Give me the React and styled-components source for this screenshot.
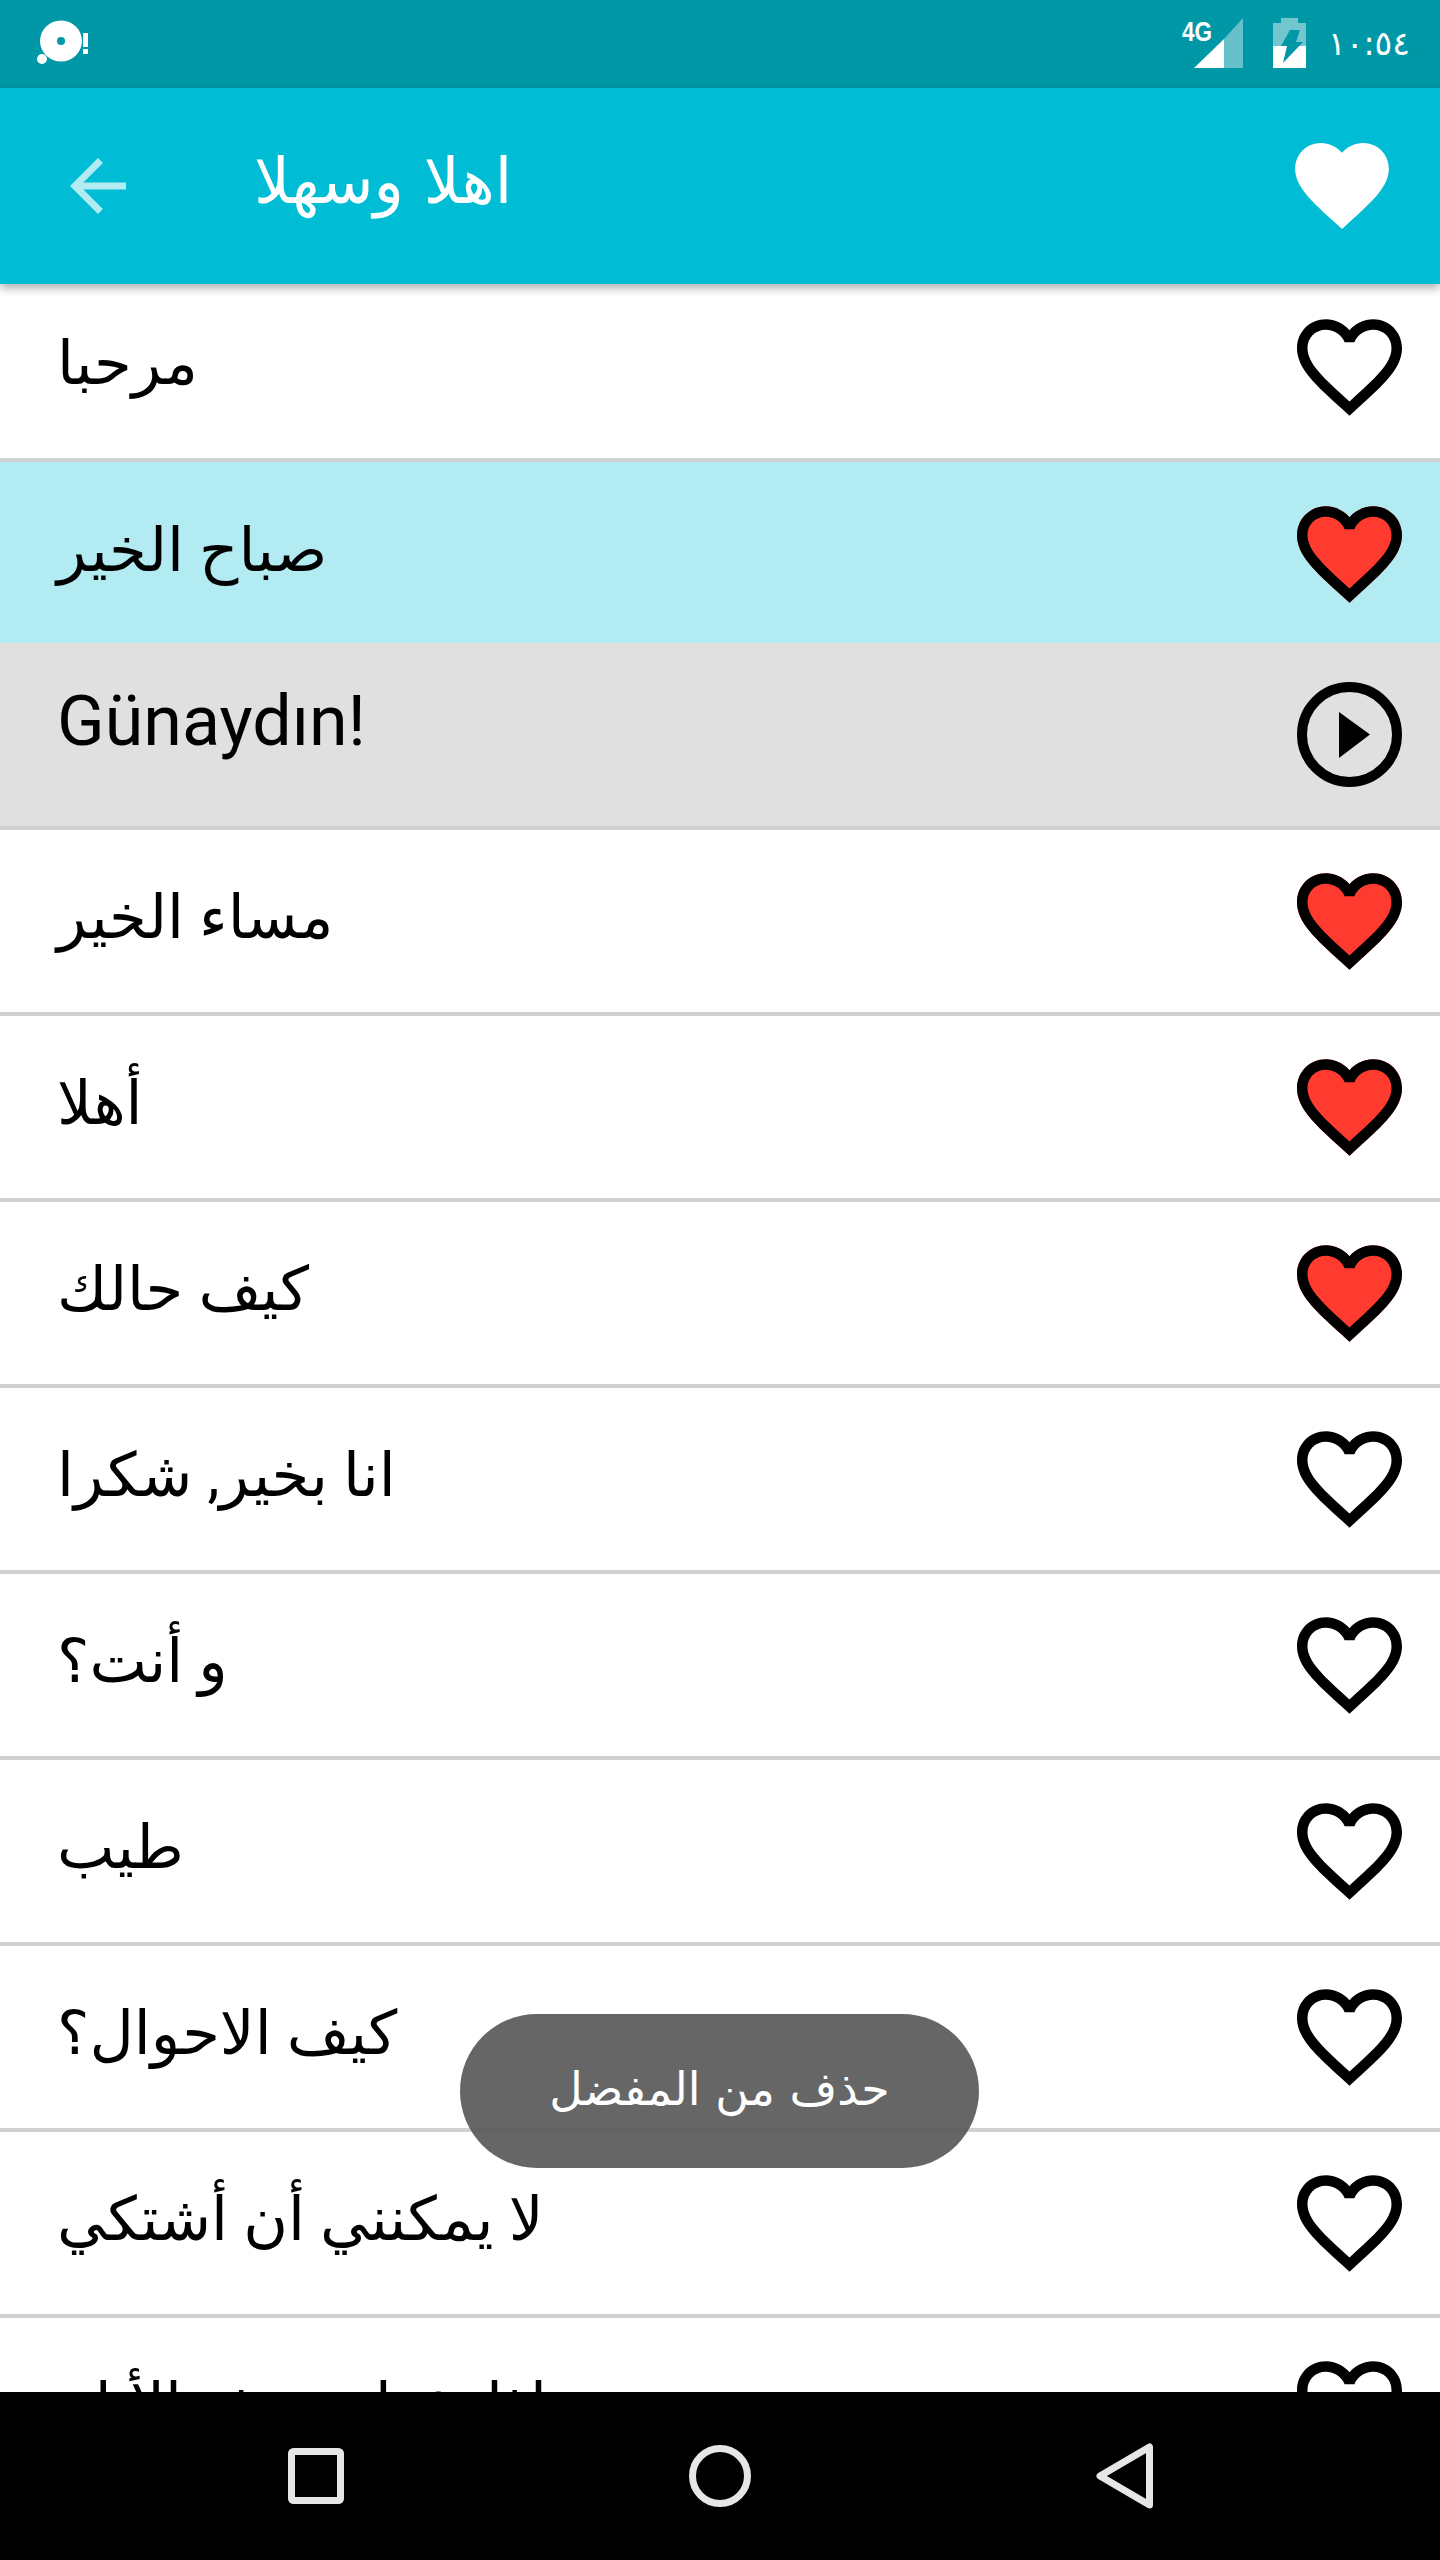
import React from "react";
import styled, { createGlobalStyle } from "styled-components";

const TEAL_DARK = "#0097a7";
const TEAL = "#00bcd4";

const GlobalStyle = createGlobalStyle`
  html, body {
    margin: 0;
    padding: 0;
    background: #ffffff;
  }
`;

const Screen = styled.div`
  position: relative;
  width: 1440px;
  height: 2560px;
  overflow: hidden;
  display: flex;
  flex-direction: column;
  font-family: Roboto, "DejaVu Sans", sans-serif;
  background: #ffffff;
`;

const StatusBar = styled.div`
  flex: 0 0 88px;
  box-sizing: border-box;
  display: flex;
  align-items: center;
  justify-content: space-between;
  padding: 0 30px 2px 37px;
  background: ${TEAL_DARK};
  color: #ffffff;
`;

const StatusRight = styled.div`
  display: flex;
  align-items: center;
`;

const BatteryIcon = styled.svg`
  margin: 0 22px 0 30px;
`;

const Clock = styled.span`
  font-family: "DejaVu Sans", sans-serif;
  font-size: 33px;
  line-height: 1;
`;

const AppBar = styled.header`
  position: relative;
  z-index: 2;
  flex: 0 0 196px;
  display: flex;
  align-items: center;
  padding: 0 51px 0 70px;
  background: ${TEAL};
  color: #ffffff;
  box-shadow: 0 4px 9px rgba(0, 0, 0, 0.32);
`;

const Title = styled.h1`
  flex: 1;
  margin: 0 0 8px 128px;
  font-family: "DejaVu Sans", sans-serif;
  font-size: 63px;
  font-weight: 400;
  line-height: 1.2;
  direction: rtl;
  text-align: left;
`;

// the list sits scrolled a little under the app bar
const List = styled.div`
  flex: 1;
  min-height: 0;
  margin-top: -8px;
  overflow: hidden;
`;

const Row = styled.div`
  box-sizing: border-box;
  height: ${(p) => p.$height || 186}px;
  display: flex;
  align-items: center;
  justify-content: space-between;
  padding: ${(p) => (p.$flat ? "3px" : "0")} 38px 0 57px;
  border-bottom: ${(p) => (p.$flat ? "none" : "4px solid #d1d1d1")};
  background: ${(p) => p.$bg || "#ffffff"};
`;

const Phrase = styled.span`
  padding-bottom: ${(p) => (p.$latin ? 28 : 6)}px;
  font-size: ${(p) => (p.$latin ? 70 : 61)}px;
  line-height: 1.2;
  color: #000000;
`;

const NavBar = styled.nav`
  flex: 0 0 168px;
  display: flex;
  align-items: center;
  justify-content: center;
  gap: 345px;
  background: #000000;
`;

const Toast = styled.div`
  position: absolute;
  left: 460px;
  top: 2014px;
  box-sizing: border-box;
  width: 519px;
  height: 154px;
  padding-bottom: 4px;
  border-radius: 77px;
  display: flex;
  align-items: center;
  justify-content: center;
  background: rgba(85, 85, 85, 0.9);
  color: #ffffff;
  font-family: "DejaVu Sans", sans-serif;
  font-size: 46px;
`;

const HEART_D =
  "M16.5 3c-1.74 0-3.41.81-4.5 2.09C10.91 3.81 9.24 3 7.5 3 4.42 3 2 5.42 2 8.5c0 3.78 3.4 6.86 8.55 11.54L12 21.35l1.45-1.32C18.6 15.36 22 12.28 22 8.5 22 5.42 19.58 3 16.5 3z";
const HEART_BORDER_D =
  HEART_D +
  "m-4.4 15.55l-.1.1-.1-.1C7.14 14.24 4 11.39 4 8.5 4 6.5 5.5 5 7.5 5c1.54 0 3.04.99 3.57 2.36h1.87C13.46 5.99 14.96 5 16.5 5c2 0 3.5 1.5 3.5 3.5 0 2.89-3.14 5.74-7.9 10.05z";

const RowHeart = ({ on }) => (
  <svg width="105" height="97" viewBox="2 3 20 18.35">
    {on && <path d={HEART_D} fill="#ff3b2f" />}
    <path d={HEART_BORDER_D} fill="#000" />
  </svg>
);

const PlayCircle = () => (
  <svg width="105" height="105" viewBox="0 0 105 105">
    <circle cx="52.5" cy="52.5" r="47.5" fill="none" stroke="#000" strokeWidth="10" />
    <path d="M42 30 L73 52.5 L42 76 Z" fill="#000" />
  </svg>
);

const rows = [
  { text: "مرحبا" },
  { text: "صباح الخير", bg: "#b2ebf2", fav: true, height: 181, flat: true },
  { text: "Günaydın!", bg: "#e0e0e0", play: true, latin: true, height: 187 },
  { text: "مساء الخير", fav: true },
  { text: "أهلا", fav: true },
  { text: "كيف حالك", fav: true },
  { text: "انا بخير, شكرا" },
  { text: "و أنت؟" },
  { text: "طيب" },
  { text: "كيف الاحوال؟" },
  { text: "لا يمكنني أن أشتكي" },
  { text: "ماذا تفعلين هذه الأيام" },
];

export default function App() {
  return (
    <Screen>
      <GlobalStyle />
      <StatusBar>
        <svg width="53" height="46" viewBox="0 0 53 46">
          <ellipse cx="24" cy="21" rx="21" ry="20.5" fill="#fff" />
          <circle cx="24" cy="21" r="4" fill={TEAL_DARK} />
          <circle cx="5" cy="39" r="5" fill="#fff" />
          <rect x="46" y="13" width="5" height="14" fill="#fff" />
          <rect x="46" y="29" width="5" height="5" fill="#fff" />
        </svg>
        <StatusRight>
          <svg width="61" height="58" viewBox="0 -4 61 58">
            <text
              x="0"
              y="23"
              fontFamily="Liberation Sans"
              fontWeight="700"
              fontSize="28"
              textLength="30"
              lengthAdjust="spacingAndGlyphs"
              fill="#fff"
            >
              4G
            </text>
            <path d="M42 21 L61 0 V50 H42 Z" fill="#fff" opacity="0.4" />
            <path d="M12 50 L42 21 V50 Z" fill="#fff" />
          </svg>
          <BatteryIcon width="33" height="50" viewBox="0 0 33 50">
            <path d="M8 0 H25 V5 H33 V28 H0 V5 H8 Z" fill="#fff" opacity="0.45" />
            <rect x="0" y="28" width="33" height="22" fill="#fff" />
            <path d="M17 12 H27 L23 24 H30 L10 45 L14 28 H8 Z" fill={TEAL_DARK} />
          </BatteryIcon>
          <Clock>١٠:٥٤</Clock>
        </StatusRight>
      </StatusBar>
      <AppBar>
        <svg width="56" height="56" viewBox="4 4 16 16">
          <path
            d="M20 11H7.83l5.59-5.59L12 4l-8 8 8 8 1.41-1.41L7.83 13H20v-2z"
            fill="#b2ebf2"
          />
        </svg>
        <Title>اهلا وسهلا</Title>
        <svg width="94" height="86" viewBox="2 3 20 18.35">
          <path d={HEART_D} fill="#fff" />
        </svg>
      </AppBar>
      <List>
        {rows.map((r) => (
          <Row key={r.text} $bg={r.bg} $height={r.height} $flat={r.flat}>
            <Phrase dir="auto" $latin={r.latin}>
              {r.text}
            </Phrase>
            {r.play ? <PlayCircle /> : <RowHeart on={r.fav} />}
          </Row>
        ))}
      </List>
      <NavBar>
        <svg width="56" height="56" viewBox="0 0 56 56">
          <rect x="3.5" y="3.5" width="49" height="49" rx="2" fill="none" stroke="#e6e6e6" strokeWidth="7" />
        </svg>
        <svg width="62" height="62" viewBox="0 0 62 62">
          <circle cx="31" cy="31" r="27.5" fill="none" stroke="#e6e6e6" strokeWidth="7" />
        </svg>
        <svg width="57" height="66" viewBox="0 0 57 66">
          <path
            d="M53.5 4 V62 L4 33 Z"
            fill="none"
            stroke="#e6e6e6"
            strokeWidth="7"
            strokeLinejoin="round"
          />
        </svg>
      </NavBar>
      <Toast>حذف من المفضل</Toast>
    </Screen>
  );
}
